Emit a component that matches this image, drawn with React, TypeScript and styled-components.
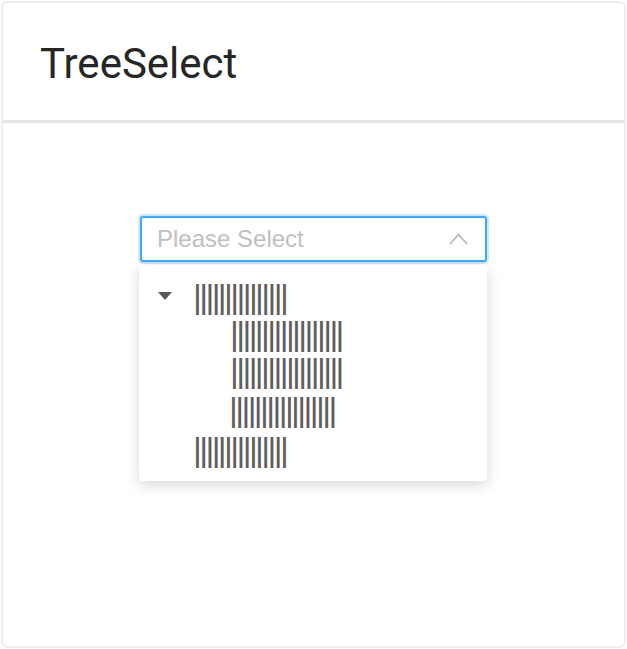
import React from "react";
import styled, { createGlobalStyle } from "styled-components";

const Global = createGlobalStyle`
  html, body { margin: 0; padding: 0; background: #ffffff; }
  body {
    font-family: Roboto, "Liberation Sans", sans-serif;
    -webkit-font-smoothing: antialiased;
  }
`;

const Card = styled.div`
  box-sizing: border-box;
  margin: 1px 0 0 1px;
  width: 625px;
  height: 647px;
  border: 2px solid #eeeeee;
  border-radius: 6px;
  background: #ffffff;
  display: flex;
  flex-direction: column;
`;

const Header = styled.div`
  height: 120px;
  box-sizing: border-box;
  padding: 37px 0 0 37px;
  border-bottom: 3px solid #e4e4e4;
`;

const Title = styled.h1`
  margin: 0;
  font-family: Roboto, sans-serif;
  font-weight: 400;
  font-size: 42px;
  line-height: 48px;
  color: #262626;
`;

const Body = styled.div`
  flex: 1;
  padding: 93px 0 0 136px;
`;

const SelectWrap = styled.div`
  position: relative;
  width: 349px;
`;

const SelectBox = styled.div`
  box-sizing: border-box;
  margin-left: 1px;
  width: 347px;
  height: 46px;
  border: 2px solid #40a9ff;
  border-radius: 3px;
  box-shadow: 0 0 0 2px rgba(24, 144, 255, 0.22);
  display: flex;
  align-items: center;
  justify-content: space-between;
  padding: 0 17px 0 15px;
`;

const Placeholder = styled.span`
  font-family: "Liberation Sans", Arial, sans-serif;
  font-size: 24px;
  color: #bfbfbf;
`;

const Dropdown = styled.div`
  position: absolute;
  top: 49px;
  left: 0;
  width: 348px;
  height: 216px;
  box-sizing: border-box;
  background: #ffffff;
  border-radius: 3px;
  box-shadow: 0 4px 14px rgba(0, 0, 0, 0.16);
  padding: 15px 0 0 0;
  display: flex;
  flex-direction: column;
`;

const Row = styled.div<{ $indent: number; $h: number }>`
  height: ${(p) => p.$h}px;
  display: flex;
  align-items: flex-start;
  padding-left: ${(p) => p.$indent}px;
`;

const CaretSlot = styled.span`
  width: 54px;
  height: 32px;
  display: flex;
  align-items: center;
  padding-left: 19px;
  box-sizing: border-box;
`;

const Label = styled.span`
  font-family: "Liberation Sans", Arial, sans-serif;
  font-size: 34px;
  line-height: 32px;
  letter-spacing: -2.62px;
  color: #5e5e5e;
  white-space: pre;
`;

const bars = (n: number) => "|".repeat(n);

const rows = [
  { n: 15, indent: 0, caret: true, h: 37 },
  { n: 18, indent: 91, caret: false, h: 37 },
  { n: 18, indent: 91, caret: false, h: 39 },
  { n: 17, indent: 90, caret: false, h: 40 },
  { n: 15, indent: 54, caret: false, h: 38 },
];

export default function App() {
  return (
    <>
      <Global />
      <Card>
        <Header>
          <Title>TreeSelect</Title>
        </Header>
        <Body>
          <SelectWrap>
            <SelectBox>
              <Placeholder>Please Select</Placeholder>
              <svg width="19" height="12" viewBox="0 0 19 12">
                <polyline
                  points="1,11 9.5,1.5 18,11"
                  fill="none"
                  stroke="#b5b5b5"
                  strokeWidth="1.6"
                />
              </svg>
            </SelectBox>
            <Dropdown>
              {rows.map((r, i) => (
                <Row key={i} $indent={r.indent} $h={r.h}>
                  {r.caret && (
                    <CaretSlot>
                      <svg width="14" height="8" viewBox="0 0 14 8">
                        <polygon points="0,0 14,0 7,8" fill="#595959" />
                      </svg>
                    </CaretSlot>
                  )}
                  <Label>{bars(r.n)}</Label>
                </Row>
              ))}
            </Dropdown>
          </SelectWrap>
        </Body>
      </Card>
    </>
  );
}
